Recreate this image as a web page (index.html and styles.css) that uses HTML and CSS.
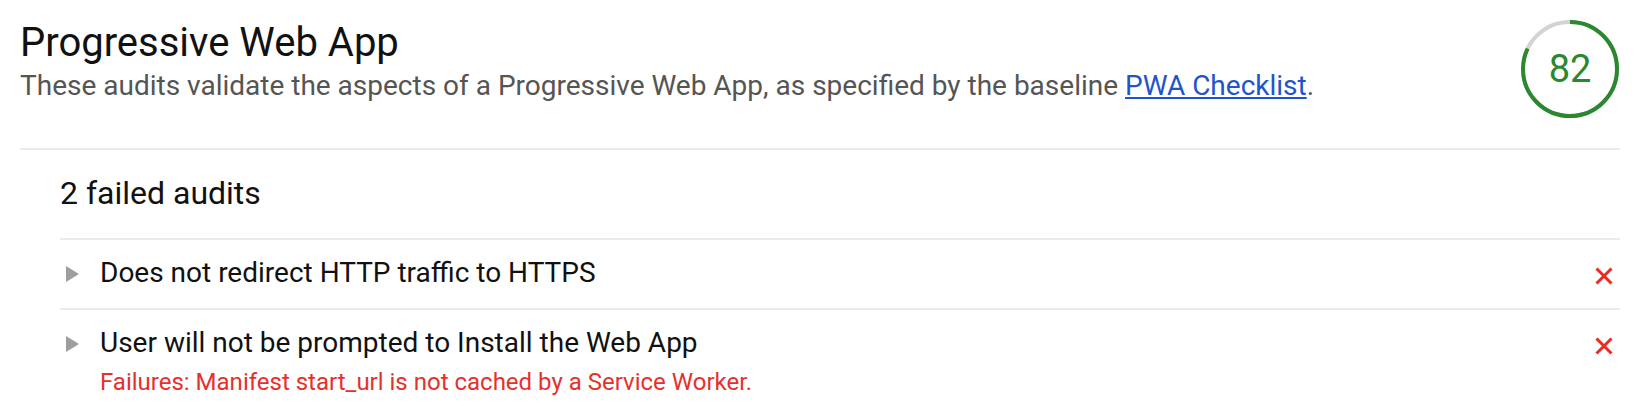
FILE: index.html
```html
<!DOCTYPE html>
<html lang="en">
<head>
<meta charset="utf-8">
<title>Progressive Web App</title>
<link rel="stylesheet" href="styles.css">
</head>
<body>
<section class="category">
  <header class="category-header">
    <div class="category-text">
      <h1 class="category-title">Progressive Web App</h1>
      <p class="category-desc">These audits validate the aspects of a Progressive Web App, as specified by the baseline <a class="link" href="#">PWA Checklist</a>.</p>
    </div>
    <div class="gauge">
      <svg class="gauge-svg" width="100" height="100" viewBox="0 0 100 100">
        <circle class="gauge-base" cx="50" cy="50" r="47"></circle>
        <circle class="gauge-arc" cx="50" cy="50" r="47" stroke-dasharray="242.2 295.3" transform="rotate(-90 50 50)"></circle>
      </svg>
      <span class="gauge-value">82</span>
    </div>
  </header>

  <div class="group">
    <h2 class="group-title">2 failed audits</h2>
    <div class="audit">
      <span class="arrow"></span>
      <div class="audit-body">
        <div class="audit-title">Does not redirect HTTP traffic to HTTPS</div>
      </div>
      <svg class="fail-icon" width="18" height="18" viewBox="0 0 18 18"><path d="M1.5 1.5L16.5 16.5M16.5 1.5L1.5 16.5"></path></svg>
    </div>
    <div class="audit">
      <span class="arrow"></span>
      <div class="audit-body">
        <div class="audit-title">User will not be prompted to Install the Web App</div>
        <div class="audit-error">Failures: Manifest start_url is not cached by a Service Worker.</div>
      </div>
      <svg class="fail-icon" width="18" height="18" viewBox="0 0 18 18"><path d="M1.5 1.5L16.5 16.5M16.5 1.5L1.5 16.5"></path></svg>
    </div>
  </div>
</section>
</body>
</html>
```
FILE: styles.css
```css
* { box-sizing: border-box; }

html, body {
  margin: 0;
  padding: 0;
  background: #fff;
}

body {
  font-family: Roboto, "Liberation Sans", Arial, sans-serif;
  color: #111;
}

.category {
  padding: 19px 25px 0 20px;
}

.category-header {
  display: flex;
  justify-content: space-between;
  align-items: flex-start;
  padding-bottom: 29px;
  border-bottom: 2px solid #ebebeb;
}

.category-title {
  margin: 0;
  font-size: 40px;
  line-height: 48px;
  font-weight: 400;
  color: #111;
}

.category-desc {
  margin: 2px 0 0;
  font-size: 28px;
  line-height: 34px;
  color: #555;
}

.link {
  color: #1f55c9;
  text-decoration: underline;
}

.gauge {
  position: relative;
  width: 100px;
  height: 100px;
  display: flex;
  align-items: center;
  justify-content: center;
}

.gauge-svg {
  position: absolute;
  left: 0;
  top: 0;
}

.gauge-base {
  fill: none;
  stroke: #d3d3d3;
  stroke-width: 4;
}

.gauge-arc {
  fill: none;
  stroke: #2b882f;
  stroke-width: 4;
}

.gauge-value {
  position: relative;
  font-size: 38px;
  line-height: 38px;
  color: #2b882f;
}

.group {
  margin-left: 40px;
}

.group-title {
  margin: 0;
  padding: 23px 0 25px;
  font-size: 32px;
  line-height: 40px;
  font-weight: 400;
  color: #111;
}

.audit {
  display: flex;
  align-items: flex-start;
  border-top: 2px solid #ebebeb;
  padding: 16px 0 18px;
}

.arrow {
  flex: none;
  width: 0;
  height: 0;
  margin: 10px 21px 0 6px;
  border-top: 8px solid transparent;
  border-bottom: 8px solid transparent;
  border-left: 13px solid #9e9e9e;
}

.audit-body {
  flex: 1;
}

.audit-title {
  font-size: 28px;
  line-height: 34px;
  color: #111;
}

.audit-error {
  margin-top: 7px;
  font-size: 24px;
  line-height: 30px;
  color: #e5312c;
}

.fail-icon {
  flex: none;
  margin: 11px 7px 0 0;
}

.fail-icon path {
  fill: none;
  stroke: #ec2a24;
  stroke-width: 3;
}
```
